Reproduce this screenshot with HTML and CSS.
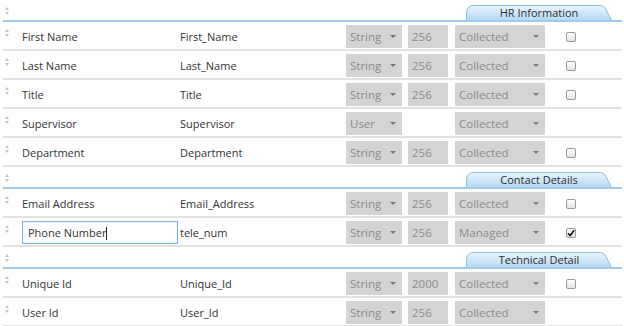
FILE: index.html
```html
<!DOCTYPE html>
<html lang="en">
<head>
    <meta charset="UTF-8">
    <link rel="stylesheet" href="styles.css">
    <title>Field Mapping</title>
</head>
<body>
    <div class="mapping">
        <div class="section-head">
            <span class="sort"></span>
            <div class="tab">
                <svg class="tab-bg" width="146" height="15" viewBox="0 0 146 15">
                    <defs>
                        <linearGradient id="tg1" x1="0" y1="0" x2="0" y2="1">
                            <stop offset="0" stop-color="#eaf5fe"/>
                            <stop offset="1" stop-color="#b4daf5"/>
                        </linearGradient>
                    </defs>
                    <path d="M0.5 15 L0.5 8 Q0.5 0.5 8 0.5 L134 0.5 Q137 0.5 139 3 L145.5 15" fill="url(#tg1)" stroke="#88c0ea"/>
                </svg>
                <span>HR Information</span>
            </div>
        </div>
        <div class="row">
            <span class="sort"></span>
            <div class="name">First Name</div>
            <div class="field">First_Name</div>
            <div class="select type">String<i class="caret"></i></div>
            <div class="length">256</div>
            <div class="select status">Collected<i class="caret"></i></div>
            <div class="check"><span class="box"></span></div>
        </div>
        <div class="row">
            <span class="sort"></span>
            <div class="name">Last Name</div>
            <div class="field">Last_Name</div>
            <div class="select type">String<i class="caret"></i></div>
            <div class="length">256</div>
            <div class="select status">Collected<i class="caret"></i></div>
            <div class="check"><span class="box"></span></div>
        </div>
        <div class="row">
            <span class="sort"></span>
            <div class="name">Title</div>
            <div class="field">Title</div>
            <div class="select type">String<i class="caret"></i></div>
            <div class="length">256</div>
            <div class="select status">Collected<i class="caret"></i></div>
            <div class="check"><span class="box"></span></div>
        </div>
        <div class="row">
            <span class="sort"></span>
            <div class="name">Supervisor</div>
            <div class="field">Supervisor</div>
            <div class="select type">User<i class="caret"></i></div>
            <div class="length empty"></div>
            <div class="select status">Collected<i class="caret"></i></div>
            <div class="check"></div>
        </div>
        <div class="row">
            <span class="sort"></span>
            <div class="name">Department</div>
            <div class="field">Department</div>
            <div class="select type">String<i class="caret"></i></div>
            <div class="length">256</div>
            <div class="select status">Collected<i class="caret"></i></div>
            <div class="check"><span class="box"></span></div>
        </div>

        <div class="section-head">
            <span class="sort"></span>
            <div class="tab">
                <svg class="tab-bg" width="146" height="15" viewBox="0 0 146 15">
                    <defs>
                        <linearGradient id="tg2" x1="0" y1="0" x2="0" y2="1">
                            <stop offset="0" stop-color="#eaf5fe"/>
                            <stop offset="1" stop-color="#b4daf5"/>
                        </linearGradient>
                    </defs>
                    <path d="M0.5 15 L0.5 8 Q0.5 0.5 8 0.5 L134 0.5 Q137 0.5 139 3 L145.5 15" fill="url(#tg2)" stroke="#88c0ea"/>
                </svg>
                <span>Contact Details</span>
            </div>
        </div>
        <div class="row">
            <span class="sort"></span>
            <div class="name">Email Address</div>
            <div class="field">Email_Address</div>
            <div class="select type">String<i class="caret"></i></div>
            <div class="length">256</div>
            <div class="select status">Collected<i class="caret"></i></div>
            <div class="check"><span class="box"></span></div>
        </div>
        <div class="row">
            <span class="sort"></span>
            <div class="name"><div class="edit">Phone Number<span class="cursor"></span></div></div>
            <div class="field">tele_num</div>
            <div class="select type">String<i class="caret"></i></div>
            <div class="length">256</div>
            <div class="select status">Managed<i class="caret"></i></div>
            <div class="check">
                <span class="box">
                    <svg width="8" height="8" viewBox="0 0 8 8"><path d="M1 4.2 L3.2 6.6 L7.2 1.2" fill="none" stroke="#111" stroke-width="1.6"/></svg>
                </span>
            </div>
        </div>

        <div class="section-head">
            <span class="sort"></span>
            <div class="tab">
                <svg class="tab-bg" width="146" height="15" viewBox="0 0 146 15">
                    <defs>
                        <linearGradient id="tg3" x1="0" y1="0" x2="0" y2="1">
                            <stop offset="0" stop-color="#eaf5fe"/>
                            <stop offset="1" stop-color="#b4daf5"/>
                        </linearGradient>
                    </defs>
                    <path d="M0.5 15 L0.5 8 Q0.5 0.5 8 0.5 L134 0.5 Q137 0.5 139 3 L145.5 15" fill="url(#tg3)" stroke="#88c0ea"/>
                </svg>
                <span>Technical Detail</span>
            </div>
        </div>
        <div class="row">
            <span class="sort"></span>
            <div class="name">Unique Id</div>
            <div class="field">Unique_Id</div>
            <div class="select type">String<i class="caret"></i></div>
            <div class="length">2000</div>
            <div class="select status">Collected<i class="caret"></i></div>
            <div class="check"><span class="box"></span></div>
        </div>
        <div class="row">
            <span class="sort"></span>
            <div class="name">User Id</div>
            <div class="field">User_Id</div>
            <div class="select type">String<i class="caret"></i></div>
            <div class="length">256</div>
            <div class="select status">Collected<i class="caret"></i></div>
            <div class="check"></div>
        </div>
    </div>
</body>
</html>
```

FILE: styles.css
```css
body {
    margin: 0;
    background: #fff;
    font-family: 'Open Sans', 'Liberation Sans', sans-serif;
    font-size: 11px;
    color: #333;
    overflow: hidden;
}

.mapping {
    margin-left: 3px;
    width: 619px;
}

/* tiny up/down arrows used as a drag handle */
.sort {
    position: relative;
    display: inline-block;
    width: 19px;
    height: 9px;
    flex: none;
}

.sort::before,
.sort::after {
    content: '';
    position: absolute;
    left: 2px;
    border-left: 2.5px solid transparent;
    border-right: 2.5px solid transparent;
}

.sort::before {
    top: 0;
    border-bottom: 3px solid #c4c4c4;
}

.sort::after {
    top: 5px;
    border-top: 3px solid #c4c4c4;
}

.section-head {
    display: flex;
    align-items: flex-end;
    height: 20px;
    border-bottom: 2px solid #9fcbee;
}

.section-head .sort {
    align-self: center;
    margin-top: 3px;
}

.tab {
    position: relative;
    margin-left: auto;
    margin-right: 10px;
    width: 146px;
    height: 15px;
    text-align: center;
    line-height: 15px;
    color: #2d2d2d;
}

.tab-bg {
    position: absolute;
    left: 0;
    top: 0;
}

.tab span {
    position: relative;
}

.row {
    display: flex;
    align-items: center;
    height: 25px;
    padding-top: 2px;
    border-bottom: 2px solid #e2e2e2;
}

.row .sort {
    margin-top: -6px;
}

.name {
    width: 158px;
    flex: none;
}

.field {
    width: 166px;
    flex: none;
}

.edit {
    width: 149px;
    height: 21px;
    line-height: 21px;
    padding-left: 5px;
    border: 1px solid #7fb0e6;
    box-shadow: inset 0 0 2px rgba(100, 150, 220, 0.35);
}

.cursor {
    display: inline-block;
    width: 1px;
    height: 13px;
    background: #222;
    vertical-align: middle;
    margin-top: -2px;
}

.select,
.length {
    position: relative;
    height: 23px;
    line-height: 23px;
    background: #d4d4d4;
    color: #8a8a8a;
    font-size: 11.5px;
    padding-left: 4px;
    box-sizing: border-box;
    flex: none;
}

.type {
    width: 56px;
}

.length {
    width: 40px;
    margin-left: 6px;
}

.length.empty {
    background: none;
}

.status {
    width: 90px;
    margin-left: 7px;
}

.caret {
    position: absolute;
    right: 6px;
    top: 10px;
    border-left: 3px solid transparent;
    border-right: 3px solid transparent;
    border-top: 3px solid #777;
}

.check {
    width: 40px;
    padding-left: 21px;
    display: flex;
    align-items: center;
}

.box {
    display: flex;
    width: 8px;
    height: 8px;
    border: 1px solid #9a9a9a;
    border-radius: 2px;
    background: linear-gradient(#fff, #e4e4e4);
}
```
